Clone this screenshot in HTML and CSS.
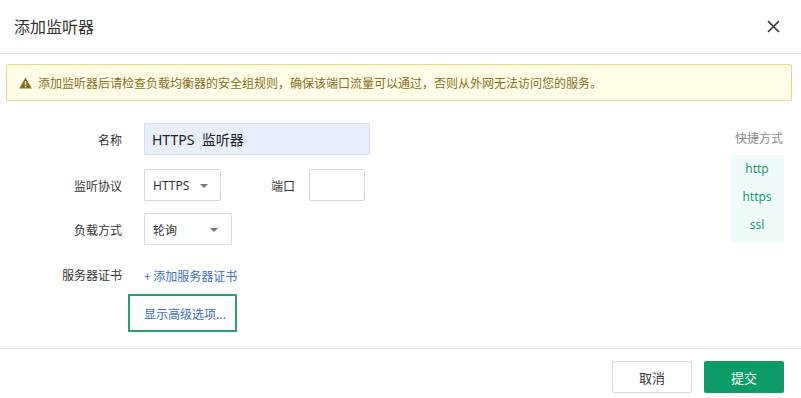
FILE: index.html
```html
<!DOCTYPE html>
<html lang="zh">
<head>
<meta charset="utf-8">
<link rel="stylesheet" href="styles.css">
</head>
<body>
<div class="dialog">
  <div class="header">
    <div class="title">添加监听器</div>
    <svg class="close" width="13" height="13" viewBox="0 0 13 13"><path d="M1 1L12 12M12 1L1 12" stroke="#333" stroke-width="1.6" fill="none"/></svg>
  </div>
  <div class="warning">
    <svg class="warn-icon" width="13" height="12" viewBox="0 0 13 12"><path d="M6.5 0.5L12.8 11.5H0.2Z" fill="#8a6d1e"/><rect x="5.9" y="4" width="1.2" height="4.2" fill="#fffbe0"/><rect x="5.9" y="9" width="1.2" height="1.2" fill="#fffbe0"/></svg>
    <span>添加监听器后请检查负载均衡器的安全组规则，确保该端口流量可以通过，否则从外网无法访问您的服务。</span>
  </div>
  <div class="content">
    <div class="form">
      <div class="row r1">
        <div class="label">名称</div>
        <div class="name-input">HTTPS&nbsp; 监听器</div>
      </div>
      <div class="row r2">
        <div class="label">监听协议</div>
        <div class="select sel-proto"><span>HTTPS</span><i class="caret"></i></div>
        <div class="port-label">端口</div>
        <div class="port-input"></div>
      </div>
      <div class="row r3">
        <div class="label">负载方式</div>
        <div class="select sel-load"><span>轮询</span><i class="caret"></i></div>
      </div>
      <div class="row r4">
        <div class="label">服务器证书</div>
        <div class="link">+ 添加服务器证书</div>
      </div>
      <div class="adv-wrap">
        <div class="adv">显示高级选项...</div>
      </div>
    </div>
    <div class="quick">
      <div class="quick-title">快捷方式</div>
      <div class="quick-list">
        <div class="quick-item">http</div>
        <div class="quick-item">https</div>
        <div class="quick-item">ssl</div>
      </div>
    </div>
  </div>
  <div class="footer">
    <div class="btn cancel">取消</div>
    <div class="btn submit">提交</div>
  </div>
</div>
</body>
</html>
```
FILE: styles.css
```css
* { box-sizing: border-box; }
html, body { margin: 0; padding: 0; background: #fff; }
body {
  font-family: "Noto Sans CJK SC", "Noto Sans", sans-serif;
  color: #333;
  width: 801px;
  height: 398px;
  overflow: hidden;
}
.dialog { width: 801px; }
.header {
  height: 54px;
  border-bottom: 1px solid #e6e6e6;
  display: flex;
  align-items: center;
  justify-content: space-between;
  padding: 0 21px 0 14px;
}
.title { font-size: 16px; color: #333; line-height: 20px; margin-top: -2px; }
.close { display: block; margin-top: -1px; }
.warning {
  margin: 10px 9px 0 6px;
  height: 37px;
  border: 1px solid #f1d77c;
  border-radius: 2px;
  background: #fffde8;
  display: flex;
  align-items: center;
  padding-left: 12px;
  font-size: 12px;
  color: #8a6d1e;
}
.warn-icon { margin-right: 6px; display: block; }
.content { display: flex; height: 247px; }
.form { flex: 1; padding-top: 22px; }
.row { display: flex; align-items: center; }
.label {
  width: 122px;
  text-align: right;
  font-size: 12px;
  color: #333;
  margin-right: 22px;
}
.r1 { height: 32px; }
.r2 { height: 32px; margin-top: 14px; }
.r3 { height: 32px; margin-top: 12px; }
.r4 { height: 20px; margin-top: 19px; }
.name-input {
  width: 226px;
  height: 32px;
  background: #e8eefc;
  border: 1px solid #d5dbe6;
  border-radius: 2px;
  font-size: 14px;
  color: #222;
  padding-left: 7px;
  display: flex;
  align-items: center;
  font-family: "Noto Sans", "Noto Sans CJK SC", sans-serif;
}
.select {
  height: 32px;
  border: 1px solid #d9d9d9;
  border-radius: 2px;
  display: flex;
  align-items: center;
  justify-content: space-between;
  padding: 0 12px 0 8px;
  font-size: 12px;
  color: #333;
}
.sel-proto { width: 77px; font-family: "Noto Sans", sans-serif; }
.sel-load { width: 88px; padding-right: 13px; }
.caret {
  width: 0; height: 0;
  border-left: 4px solid transparent;
  border-right: 4px solid transparent;
  border-top: 4px solid #777;
  margin-top: 1px;
}
.port-label { font-size: 12px; margin-left: 50px; margin-right: 14px; }
.port-input {
  width: 56px; height: 32px;
  border: 1px solid #d9d9d9;
  border-radius: 2px;
}
.link { font-size: 12px; color: #3a6ec2; margin-top: 2px; }
.adv-wrap { padding-left: 128px; margin-top: 10px; }
.adv {
  width: 109px;
  height: 38px;
  border: 2px solid #2b9d74;
  font-size: 12px;
  color: #3a6ec2;
  display: flex;
  align-items: center;
  padding-left: 14px;
}
.quick { width: 54px; margin-right: 17px; padding-top: 28px; }
.quick-title { font-size: 12px; color: #888; text-align: center; margin-left: 4px; height: 18px; line-height: 18px; }
.quick-list {
  margin-top: 8px;
  background: #effcfb;
  padding: 0 0 3px;
}
.quick-item {
  height: 28px;
  line-height: 28px;
  text-align: center;
  font-size: 12px;
  color: #1a9a6a;
  font-family: "Noto Sans", sans-serif;
}
.footer {
  border-top: 1px solid #e6e6e6;
  display: flex;
  justify-content: flex-end;
  gap: 12px;
  padding: 12px 17px 0 0;
}
.btn {
  width: 80px; height: 32px;
  border-radius: 2px;
  display: flex; align-items: center; justify-content: center;
  font-size: 13px;
}
.cancel { border: 1px solid #d9d9d9; color: #333; background: #fff; }
.submit { background: #0d9b68; color: #fff; }
```
